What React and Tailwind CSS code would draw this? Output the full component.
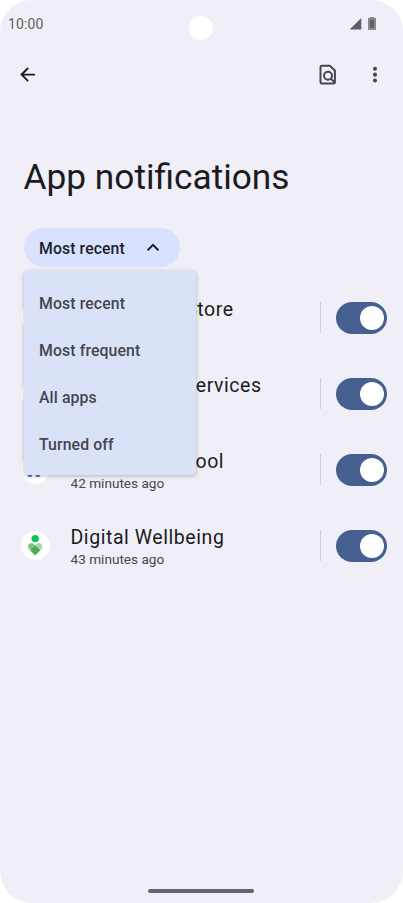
import React from 'react';

const SORT_OPTIONS = ['Most recent', 'Most frequent', 'All apps', 'Turned off'];

const APPS = [
  { name: 'Google Play Store', time: '', icon: null },
  { name: 'Google Play services', time: '', icon: null },
  { name: 'Data restore tool', time: '42 minutes ago', icon: 'restore' },
  { name: 'Digital Wellbeing', time: '43 minutes ago', icon: 'wellbeing' },
];

function StatusBar() {
  return (
    <div className="flex h-12 items-center justify-between pl-2 pr-[26px]">
      <span className="w-[60px] text-[14px] leading-4 tracking-[0.1px] text-[#5f5e64]">10:00</span>
      {/* Camera cutout */}
      <div className="mt-[7px] ml-[17px] h-6 w-6 rounded-full bg-white" />
      <div className="flex w-[60px] items-center justify-end gap-[5px]">
        <svg width="13" height="13" viewBox="0 0 13 13" fill="#5f5e64"><path d="M12.3.1v11.4H.6z" /></svg>
        <svg width="10" height="14" viewBox="0 0 10 14">
          <path d="M3 0h4v.8H8.2q.8 0 .8.8v10.6q0 .8-.8.8H1.8q-.8 0-.8-.8V1.600q0-.8.8-.8H3z" fill="#89888d" />
          <path d="M3 2.8h4v8H3z" fill="#5f5e64" />
        </svg>
      </div>
    </div>
  );
}

function Toolbar() {
  return (
    <div className="flex h-[53px] items-center justify-between pl-[17px] pr-[17px]">
      <svg width="21" height="21" viewBox="0 0 24 24" fill="#1b1b1f">
        <path d="M20.5 11H7.83l5.59-5.59L12 3.8l-8.3 8.2 8.3 8.2 1.41-1.41L7.83 13H20.5z" />
      </svg>
      <div className="flex items-center gap-[24px]">
        <svg width="24" height="24" viewBox="0 0 24 24" fill="none" stroke="#45464f" strokeWidth="2" strokeLinejoin="round">
          <path d="M13.8 2.8H5.7q-1.2 0-1.2 1.2v15.2q0 1.2 1.2 1.2h12q1.2 0 1.2-1.2V7.6z" />
          <circle cx="12" cy="12.8" r="4" />
          <path d="M14.8 15.6l4 4" />
        </svg>
        <svg width="22" height="22" viewBox="0 0 24 24" fill="#45464f">
          <circle cx="12" cy="5.2" r="2.2" />
          <circle cx="12" cy="11.6" r="2.2" />
          <circle cx="12" cy="18" r="2.2" />
        </svg>
      </div>
    </div>
  );
}

function SortMenu() {
  return (
    <div className="relative ml-[23.5px] mt-[27px] w-[173px]">
      <button className="flex h-[39px] w-[156.5px] items-center justify-between rounded-full bg-[#d8e2ff] pt-[2px] pl-[15.5px] pr-[20px] text-[15.8px] font-medium tracking-[0.1px] text-[#1b1f2b]">
        Most recent
        <svg className="-mt-[2px]" width="14" height="9" viewBox="0 0 14 9" fill="none" stroke="#1b1f2b" strokeWidth="2">
          <path d="M1.6 7.2L7 1.9l5.4 5.3" />
        </svg>
      </button>
      <ul className="absolute left-0 top-[43px] z-10 h-[204px] w-[172.4px] rounded-[4px] bg-[#dae2f7] pt-[9px] shadow-[0_1px_4px_rgba(0,0,0,0.26)]">
        {SORT_OPTIONS.map(option => (
          <li key={option} className="flex h-[47px] items-center pl-[15.5px] text-[15.8px] font-medium tracking-[0.12px] text-[#45464f]">
            {option}
          </li>
        ))}
      </ul>
    </div>
  );
}

function AppIcon({ icon }) {
  return (
    <div className="mt-px h-[28.5px] w-[28.5px] shrink-0 rounded-full bg-white">
      {icon === 'restore' && (
        <svg width="29" height="29" viewBox="0 0 29 29" fill="none" stroke="#3f7fd0" strokeWidth="4.6" strokeLinecap="round">
          <path d="M9 11v9M16.8 11v9" />
        </svg>
      )}
      {icon === 'wellbeing' && (
        <svg width="29" height="29" viewBox="0 0 29 29">
          <circle cx="14.2" cy="7.6" r="3.7" fill="#06c755" />
          <path d="M14.2 14.1q-2-2-4.3-2-2.8.5-2.8 3.6 0 1.2.9 2.2l6.2 6.4z" fill="#81c784" />
          <path d="M14.2 14.1q2-2 4.3-2 2.8.5 2.8 3.6 0 1.2-.9 2.2l-6.2 6.4z" fill="#a5d6a7" />
          <path d="M14.2 14.5l5 4.7-5 5.1-5-5.1z" fill="#4caf50" />
        </svg>
      )}
    </div>
  );
}

function AppRow({ app }) {
  return (
    <div className="flex h-[76px] items-center pl-[21px] pr-[16px]">
      <AppIcon icon={app.icon} />
      <div className="ml-[21px] h-[44px] flex-1 whitespace-nowrap pt-[2px]">
        <p className="text-[19.5px] leading-[26px] tracking-[0.56px] text-[#1b1b1f]">{app.name}</p>
        {app.time && <p className="-mt-px text-[13.6px] leading-[18px] text-[#45464f]">{app.time}</p>}
      </div>
      <div className="h-[31px] w-px bg-[#cfced5]" />
      {/* Switch */}
      <div className="mt-px ml-[15px] flex h-[32px] w-[51px] items-center justify-end rounded-full bg-[#455f91] pr-[3.5px]">
        <div className="h-6 w-6 rounded-full bg-white" />
      </div>
    </div>
  );
}

export default function App() {
  return (
    <div className="h-[903px] w-[403px] overflow-hidden bg-white font-[Roboto,sans-serif]">
      <div className="flex h-full flex-col rounded-[32px] bg-[#f0eff7]">
        <StatusBar />
        <Toolbar />
        <h1 className="ml-[23.5px] mt-[52px] text-[35.25px] leading-[48px] text-[#1b1b1f]">App notifications</h1>
        <SortMenu />
        <div className="mt-[12px]">
          {APPS.map(app => (
            <AppRow key={app.name} app={app} />
          ))}
        </div>
        <div className="ml-[148px] mt-auto mb-[10px] h-[4px] w-[106px] rounded-full bg-[#65646a]" />
      </div>
    </div>
  );
}
